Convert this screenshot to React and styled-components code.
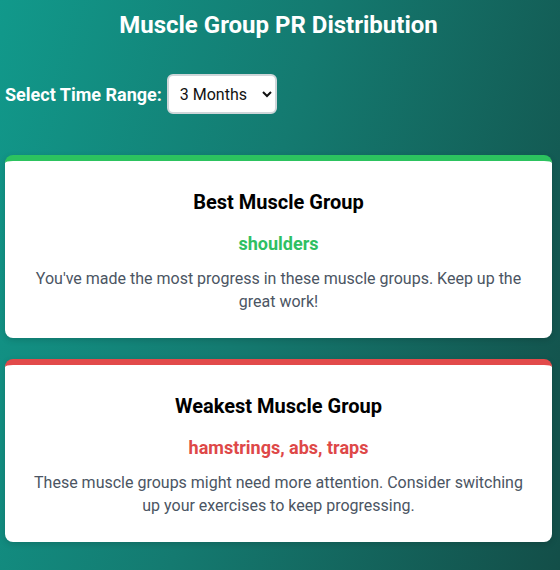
import React, { useState } from 'react'
import styled, { createGlobalStyle } from 'styled-components';

const GlobalStyle = createGlobalStyle`
  html, body {
    margin: 0;
    padding: 0;
  }
  body {
    font-family: Roboto, "Liberation Sans", sans-serif;
    background: linear-gradient(105deg, #11998b 0%, #147a70 45%, #134e48 100%);
    min-height: 570px;
  }
`;

const Page = styled.div`
  padding: 0 8px 20px 5px;
`;

const Title = styled.h1`
  margin: 0;
  padding: 10px 0 0 0;
  font-size: 24px;
  font-weight: 700;
  color: #ffffff;
  text-align: center;
  line-height: 30px;
`;

const RangeRow = styled.div`
  display: flex;
  align-items: center;
  gap: 5px;
  margin: 34px 0 41px 0;
`;

const RangeLabel = styled.label`
  font-size: 18px;
  font-weight: 700;
  color: #ffffff;
`;

const RangeSelect = styled.select`
  height: 40px;
  width: 110px;
  padding: 0 6px 0 7px;
  font-family: Roboto, "Liberation Sans", sans-serif;
  font-size: 16px;
  color: #111;
  background: #fff;
  border: 2px solid #cfd6d9;
  border-radius: 6px;
`;

const Card = styled.div`
  background: #ffffff;
  border-radius: 8px;
  border-top: 6px solid ${(p) => p.accent};
  padding: 28px 20px 25px 20px;
  margin-bottom: 21px;
  text-align: center;
  box-shadow: 0 2px 6px rgba(0, 0, 0, 0.15);
`;

const CardTitle = styled.h2`
  margin: 0;
  font-size: 20px;
  font-weight: 700;
  color: #000;
  line-height: 26px;
`;

const Groups = styled.div`
  margin-top: 17px;
  font-size: 18px;
  font-weight: 700;
  color: ${(p) => p.color};
  line-height: 23px;
`;

const Note = styled.p`
  margin: 12px 0 0 0;
  font-size: 16px;
  line-height: 23px;
  color: #4b5563;
`;

const cards = [
  {
    title: 'Best Muscle Group',
    groups: 'shoulders',
    color: '#2fbf62',
    accent: '#2cc35f',
    note: "You've made the most progress in these muscle groups. Keep up the great work!",
  },
  {
    title: 'Weakest Muscle Group',
    groups: 'hamstrings, abs, traps',
    color: '#de4848',
    accent: '#e24a4a',
    note: 'These muscle groups might need more attention. Consider switching up your exercises to keep progressing.',
  },
];

const App = () => {
  const [range, setRange] = useState('3');

  return (
    <Page>
      <GlobalStyle />
      <Title>Muscle Group PR Distribution</Title>
      <RangeRow>
        <RangeLabel htmlFor="range">Select Time Range:</RangeLabel>
        <RangeSelect id="range" value={range} onChange={(e) => setRange(e.target.value)}>
          <option value="1">1 Month</option>
          <option value="3">3 Months</option>
          <option value="6">6 Months</option>
          <option value="12">1 Year</option>
        </RangeSelect>
      </RangeRow>
      {cards.map((c) => (
        <Card key={c.title} accent={c.accent}>
          <CardTitle>{c.title}</CardTitle>
          <Groups color={c.color}>{c.groups}</Groups>
          <Note>{c.note}</Note>
        </Card>
      ))}
    </Page>
  )
}

export default App
